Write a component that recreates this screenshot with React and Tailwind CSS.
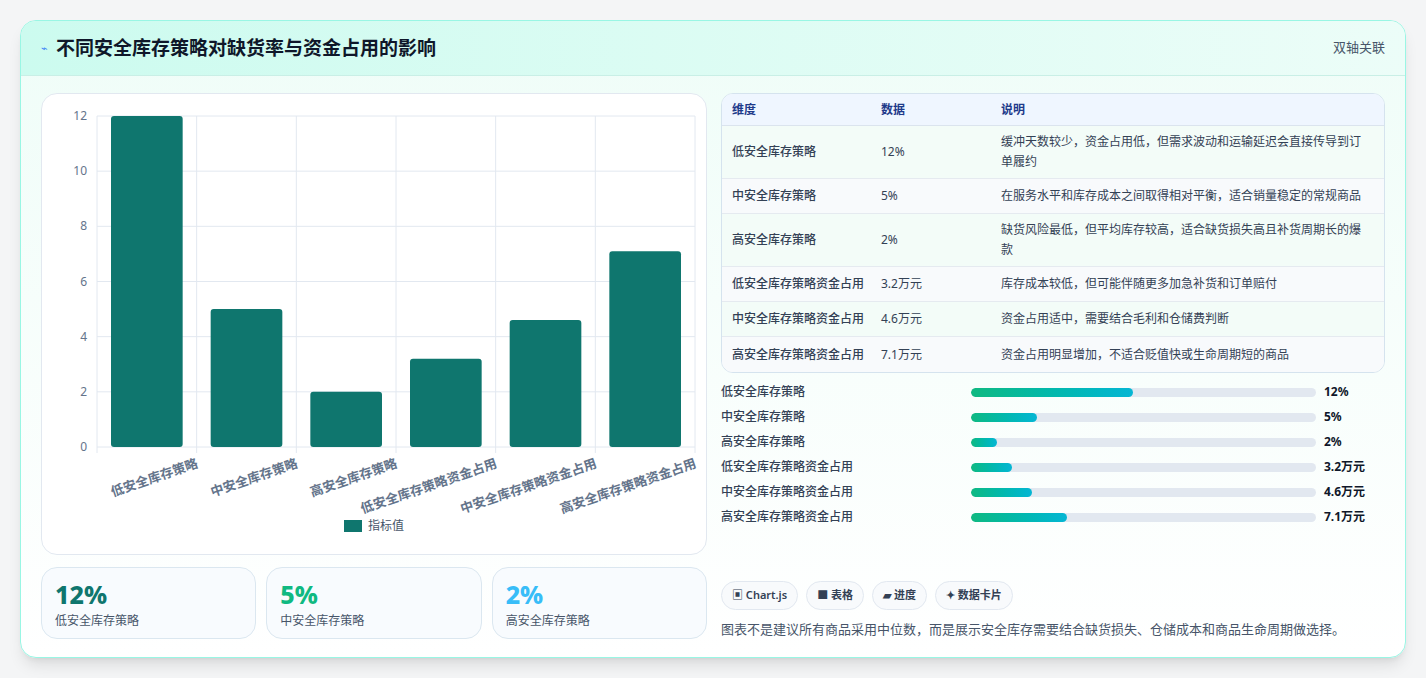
import React from "react";

const F = { fontFamily: '"Noto Sans","Noto Sans CJK SC",sans-serif' };
const cats = ["低安全库存策略","中安全库存策略","高安全库存策略","低安全库存策略资金占用","中安全库存策略资金占用","高安全库存策略资金占用"];
const vals = [12,5,2,3.2,4.6,7.1];
const rows = [
  ["低安全库存策略","12%","缓冲天数较少，资金占用低，但需求波动和运输延迟会直接传导到订单履约",53],
  ["中安全库存策略","5%","在服务水平和库存成本之间取得相对平衡，适合销量稳定的常规商品",35],
  ["高安全库存策略","2%","缺货风险最低，但平均库存较高，适合缺货损失高且补货周期长的爆款",53],
  ["低安全库存策略资金占用","3.2万元","库存成本较低，但可能伴随更多加急补货和订单赔付",35],
  ["中安全库存策略资金占用","4.6万元","资金占用适中，需要结合毛利和仓储费判断",35],
  ["高安全库存策略资金占用","7.1万元","资金占用明显增加，不适合贬值快或生命周期短的商品",35],
];
const prog = [["低安全库存策略",47,"12%"],["中安全库存策略",19,"5%"],["高安全库存策略",7.5,"2%"],["低安全库存策略资金占用",12,"3.2万元"],["中安全库存策略资金占用",17.7,"4.6万元"],["高安全库存策略资金占用",27.8,"7.1万元"]];

function Chart() {
  const x0 = 55, x1 = 653, top = 22, bot = 353;
  const unit = (bot - top) / 12;
  const cw = (x1 - x0) / 6;
  return (
    <svg width="665" height="460" style={F}>
      {[0,2,4,6,8,10,12].map(v => {
        const y = bot - v * unit;
        return <g key={v}>
          <line x1={x0} x2={x1} y1={y} y2={y} stroke="#e2e8f0" />
          <text x={x0 - 10} y={y + 4} fontSize="12" fill="#64748b" textAnchor="end">{v}</text>
        </g>;
      })}
      {[0,1,2,3,4,5,6].map(i => <line key={i} x1={x0 + i * cw} x2={x0 + i * cw} y1={top} y2={bot + 6} stroke="#e2e8f0" />)}
      {vals.map((v, i) => <rect key={i} x={x0 + i * cw + 14} y={bot - v * unit} width={cw - 28} height={v * unit} rx="3" fill="#0f766e" />)}
      {cats.map((c, i) => {
        const x = x0 + (i + 0.5) * cw + 52;
        return <text key={i} transform={`translate(${x},${bot + 20}) rotate(-19)`} fontSize="13" fontWeight="600" fill="#64748b" textAnchor="end">{c}</text>;
      })}
      <rect x="302" y="426" width="18" height="12" fill="#0f766e" />
      <text x="326" y="436" fontSize="12" fill="#475569">指标值</text>
    </svg>
  );
}

export default function App() {
  return (
    <div className="w-[1426px] h-[678px] bg-[#f4f5f6] pt-[20px] px-[20px]" style={F}>
      <div className="w-[1386px] h-[638px] rounded-2xl border border-[#99f6e4] bg-gradient-to-b from-[#effdf8] to-white overflow-hidden shadow-lg">
        <div className="h-[55px] flex items-center justify-between px-5 bg-gradient-to-r from-[#ccfbef] to-[#ecfdf8] border-b border-[#c9efe6]">
          <div className="flex items-center gap-2">
            <span className="text-[11px] text-[#3b82f6]">⌁</span>
            <span className="text-[19px] font-bold text-[#0f172a]">不同安全库存策略对缺货率与资金占用的影响</span>
          </div>
          <span className="text-[13px] text-[#475569]">双轴关联</span>
        </div>
        <div className="flex gap-[14px] px-5 pt-[17px]">
          <div className="w-[666px] flex flex-col gap-[12px]">
            <div className="h-[462px] bg-white rounded-2xl border border-[#e2e8f0]"><Chart /></div>
            <div className="grid grid-cols-3 gap-[10px]">
              {[["12%","text-[#0f766e]"],["5%","text-[#10b981]"],["2%","text-[#38bdf8]"]].map(([v, c], i) => (
                <div key={i} className="h-[72px] rounded-2xl border border-[#dbe7f0] bg-[#f8fbfe] px-[13px] pt-[10px]">
                  <div className={`text-[25px] font-extrabold leading-[32px] ${c}`}>{v}</div>
                  <div className="text-[12px] text-[#475569] mt-[2px]">{rows[i][0]}</div>
                </div>
              ))}
            </div>
          </div>
          <div className="w-[667px] flex flex-col">
            <div className="rounded-xl border border-[#d5e3ee] overflow-hidden bg-white">
              <div className="flex h-[32px] items-center bg-[#eff6ff] text-[12px] font-semibold text-[#1e3a8a] border-b border-[#dbe4ee]">
                <div className="w-[159px] pl-[10px]">维度</div><div className="w-[120px]">数据</div><div>说明</div>
              </div>
              {rows.map((r, i) => (
                <div key={i} style={{ height: r[3] }} className={`flex items-center text-[12px] text-[#334155] border-b border-[#e5eaf0] last:border-b-0 ${i % 2 ? "bg-[#f8fafc]" : "bg-[#f3fcf8]"}`}>
                  <div className="w-[159px] pl-[10px] font-medium">{r[0]}</div>
                  <div className="w-[120px]">{r[1]}</div>
                  <div className="flex-1 pr-[12px] leading-[20px]">{r[2]}</div>
                </div>
              ))}
            </div>
            <div className="flex flex-col gap-[7px] mt-[10px]">
              {prog.map(([l, p, v], i) => (
                <div key={i} className="flex items-center h-[18px] text-[12px] text-[#334155]">
                  <div className="w-[250px] font-medium">{l}</div>
                  <div className="w-[345px] h-[9px] rounded-full bg-[#e2e8f0] overflow-hidden">
                    <div className="h-full rounded-full bg-gradient-to-r from-[#10b981] to-[#06b6d4]" style={{ width: p + "%" }} />
                  </div>
                  <div className="ml-[8px] font-bold text-[#0f172a]">{v}</div>
                </div>
              ))}
            </div>
            <div className="flex gap-[8px] mt-[55px]">
              {["▣ Chart.js","■ 表格","▰ 进度","✦ 数据卡片"].map(t => (
                <span key={t} className="h-[29px] px-[10px] flex items-center rounded-full border border-[#e2e8f0] bg-[#f8fafc] text-[11px] font-semibold text-[#334155]">{t}</span>
              ))}
            </div>
            <div className="mt-[10px] text-[13px] text-[#475569]">图表不是建议所有商品采用中位数，而是展示安全库存需要结合缺货损失、仓储成本和商品生命周期做选择。</div>
          </div>
        </div>
      </div>
    </div>
  );
}
